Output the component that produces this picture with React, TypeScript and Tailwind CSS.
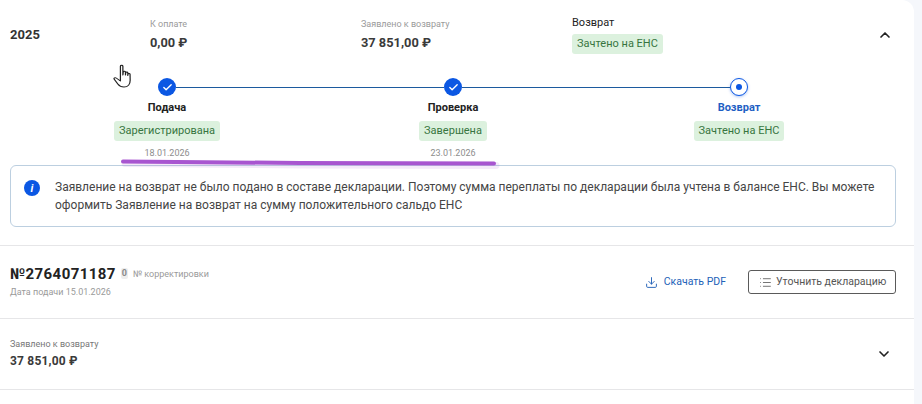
import { Check, ChevronDown, ChevronUp, Download, List } from "lucide-react";

const F = "font-['Roboto','Noto_Sans',sans-serif]";

function Tag({ children }: { children: string }) {
  return (
    <span className="flex h-5 w-fit items-center whitespace-nowrap rounded-[3px] bg-[#dcf1de] px-[5px] text-[11px] leading-4 text-[#37753f]">
      {children}
    </span>
  );
}

function Step({ title, tag, date, active }: { title: string; tag: string; date?: string; active?: boolean }) {
  return (
    <div className="flex w-[286px] flex-col items-center">
      <div className={`h-4 text-[11px] font-bold leading-4 ${active ? "text-[#1f5fc4]" : "text-[#222]"}`}>{title}</div>
      <div className="mt-[5px]">
        <Tag>{tag}</Tag>
      </div>
      <div className="mt-[6px] h-[13px] text-[9px] leading-[13px] text-[#8d8d8d]">{date}</div>
    </div>
  );
}

function Done() {
  return (
    <span className="flex h-[18px] w-[18px] shrink-0 items-center justify-center rounded-full bg-[#0b57e3]">
      <Check size={11} strokeWidth={3} className="text-white" />
    </span>
  );
}

export default function App() {
  return (
    <div className={`relative h-[404px] w-[922px] overflow-hidden bg-[#f5f7fb] ${F}`}>
      <div className="h-[404px] w-[914px] rounded-tr-[12px] bg-white">
        {/* summary */}
        <div className="flex h-[62px] items-start pl-[10px] pr-[21px] pt-[15px]">
          <div className="mt-[12px] w-[140px] text-[13px] font-bold leading-4 text-[#333]">2025</div>
          <div className="w-[211px]">
            <div className="mt-[3px] text-[9px] leading-[13px] text-[#9a9a9a]">К оплате</div>
            <div className="mt-[4px] text-[12.8px] font-bold leading-4 text-[#3a3a3a]">0,00 ₽</div>
          </div>
          <div className="w-[211px]">
            <div className="mt-[3px] text-[9px] leading-[13px] text-[#9a9a9a]">Заявлено к возврату</div>
            <div className="mt-[4px] text-[12.8px] font-bold leading-4 text-[#3a3a3a]">37 851,00 ₽</div>
          </div>
          <div className="flex-1">
            <div className="text-[11px] leading-4 text-[#222]">Возврат</div>
            <div className="mt-[3px]">
              <Tag>Зачтено на ЕНС</Tag>
            </div>
          </div>
          <ChevronUp size={16} strokeWidth={2.5} className="mt-[12px] text-[#222]" />
        </div>

        {/* stepper */}
        <div className="ml-[158px] mt-[16px] flex w-[590px] items-center">
          <Done />
          <div className="h-px flex-1 bg-[#1c5a9e]" />
          <Done />
          <div className="h-px flex-1 bg-[#1c5a9e]" />
          <span className="flex h-[18px] w-[18px] shrink-0 items-center justify-center rounded-full border border-[#0b57e3] bg-white shadow-[0_1px_3px_rgba(11,87,227,0.35)]">
            <span className="h-[6px] w-[6px] rounded-full bg-[#0b57e3]" />
          </span>
        </div>
        <div className="ml-[24px] mt-[4px] flex">
          <Step title="Подача" tag="Зарегистрирована" date="18.01.2026" />
          <Step title="Проверка" tag="Завершена" date="23.01.2026" />
          <Step title="Возврат" tag="Зачтено на ЕНС" active />
        </div>

        {/* notice */}
        <div className="ml-[10px] mt-[5px] flex h-[62px] w-[886px] gap-[15px] rounded-[6px] border border-[#bccfe0] pl-[13px] pr-[10px] pt-[12px]">
          <span className="mt-[2px] flex h-[16px] w-[16px] shrink-0 items-center justify-center rounded-full bg-[#0b57e3]">
            <span className="text-[11px] font-bold italic leading-none text-white">i</span>
          </span>
          <p className="text-[12px] leading-[18px] text-[#454545]">
            Заявление на возврат не было подано в составе декларации. Поэтому сумма переплаты по декларации была учтена в балансе ЕНС. Вы можете оформить Заявление на возврат на сумму положительного сальдо ЕНС
          </p>
        </div>

        {/* declaration */}
        <div className="mt-[18px] flex h-[74px] items-center justify-between border-y border-[#e6e6e8] pl-[10px] pr-[18px]">
          <div className="-mt-[2px]">
            <div className="flex items-center">
              <span className="text-[15px] font-bold leading-[18px] tracking-[0.4px] text-[#222]">№2764071187</span>
              <span className="ml-[5px] rounded-[2px] bg-[#eeeeee] px-[1px] text-[9px] font-bold leading-[11px] text-[#8a8a8a]">0</span>
              <span className="ml-[5px] text-[9px] leading-[12px] text-[#9a9a9a]">№ корректировки</span>
            </div>
            <div className="mt-[3px] text-[9px] leading-[12px] text-[#9a9a9a]">Дата подачи 15.01.2026</div>
          </div>
          <div className="flex items-center gap-[22px]">
            <button className="flex items-center gap-[6px] text-[10.5px] leading-4 text-[#2362b8]">
              <Download size={13} strokeWidth={1.75} />
              Скачать PDF
            </button>
            <button className="flex h-6 w-[148px] items-center gap-[4px] whitespace-nowrap rounded-[3px] border border-[#5a5a5a] pl-[10px] text-[10.5px] leading-4 text-[#555]">
              <List size={13} strokeWidth={1.5} />
              Уточнить декларацию
            </button>
          </div>
        </div>

        {/* amount */}
        <div className="flex h-[71px] items-center justify-between border-b border-[#e6e6e8] pl-[10px] pr-[22px]">
          <div className="-mt-[1px]">
            <div className="text-[9px] leading-[12px] text-[#777]">Заявлено к возврату</div>
            <div className="mt-[3px] text-[12px] font-bold leading-4 tracking-[0.2px] text-[#3a3a3a]">37 851,00 ₽</div>
          </div>
          <ChevronDown size={16} strokeWidth={2.5} className="text-[#222]" />
        </div>
      </div>

      {/* annotation stroke over the page */}
      <svg className="pointer-events-none absolute left-0 top-0" width="922" height="404" fill="none">
        <path d="M123 161.5 L300 163 L494 163.5" stroke="#a855d0" strokeOpacity="0.12" strokeWidth="7" strokeLinecap="round" transform="translate(2 2)" />
        <path d="M123 161.5 L300 163 L494 163.5" stroke="#a855d0" strokeWidth="4" strokeLinecap="round" />
      </svg>
      {/* hand cursor */}
      <svg className="pointer-events-none absolute left-[113px] top-[64px]" width="21" height="26" viewBox="0 0 17 26" preserveAspectRatio="none" fill="#fff" stroke="#222" strokeWidth="1" strokeLinejoin="round">
        <path d="M6 2.2c0-1.3 2-1.3 2 0V11l.3-3c.2-1 1.7-1 1.8.1V11l.2-2.2c.2-1 1.6-.9 1.7.1V11.5l.2-1.5c.2-.9 1.5-.8 1.6.2l.1 6c0 3.5-1.6 6.8-5 6.8-2.6 0-3.8-1-5-3L1 15.2c-.6-1 .7-2 1.6-1.2L6 17z" />
      </svg>
    </div>
  );
}
